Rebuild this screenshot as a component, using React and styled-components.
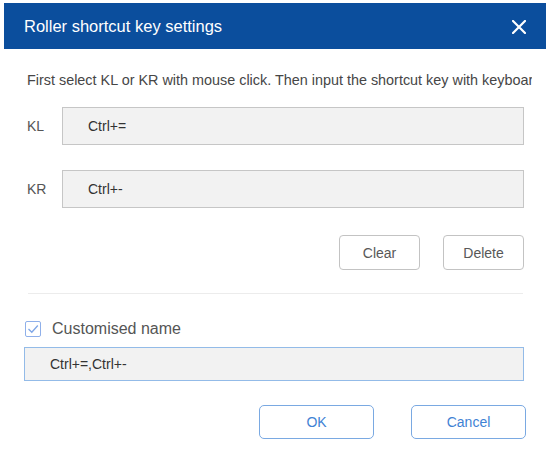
import React, { useState } from "react";
import styled, { createGlobalStyle } from "styled-components";

const GlobalStyle = createGlobalStyle`
  body {
    margin: 0;
    background: #ffffff;
    font-family: "Liberation Sans", Arial, sans-serif;
  }
`;

const App = () => {
    const [selected, setSelected] = useState(null);
    const [custom, setCustom] = useState(true);
    const [name, setName] = useState("Ctrl+=,Ctrl+-");
    const keys = [
        { id: "KL", value: "Ctrl+=" },
        { id: "KR", value: "Ctrl+-" },
    ];

    return (
        <>
            <GlobalStyle />
            <Dialog>
                <Header>
                    <Title>Roller shortcut key settings</Title>
                    <CloseButton aria-label="Close">
                        <svg width="14" height="14" viewBox="0 0 14 14">
                            <path d="M1 1 L13 13 M13 1 L1 13" stroke="#ffffff" strokeWidth="2.2" strokeLinecap="square" />
                        </svg>
                    </CloseButton>
                </Header>
                <Body>
                    <Hint>First select KL or KR with mouse click. Then input the shortcut key with keyboard</Hint>
                    {keys.map((k, i) => (
                        <KeyRow key={k.id} $gap={i === 0 ? 19 : 25}>
                            <KeyLabel>{k.id}</KeyLabel>
                            <KeyField
                                tabIndex={0}
                                $active={selected === k.id}
                                onClick={() => setSelected(k.id)}
                            >
                                {k.value}
                            </KeyField>
                        </KeyRow>
                    ))}
                    <ButtonRow $top={27} $gap={23}>
                        <GrayButton>Clear</GrayButton>
                        <GrayButton>Delete</GrayButton>
                    </ButtonRow>
                    <Divider />
                    <CheckRow onClick={() => setCustom(!custom)}>
                        <CheckBox>
                            {custom && (
                                <svg width="12" height="12" viewBox="0 0 12 12">
                                    <path d="M1.5 6 L4.8 9.2 L10.8 2.5" fill="none" stroke="#7fa6e6" strokeWidth="1.3" />
                                </svg>
                            )}
                        </CheckBox>
                        <CheckText>Customised name</CheckText>
                    </CheckRow>
                    <NameInput value={name} onChange={(e) => setName(e.target.value)} />
                    <ButtonRow $top={24} $gap={37} $overhang={2}>
                        <BlueButton>OK</BlueButton>
                        <BlueButton>Cancel</BlueButton>
                    </ButtonRow>
                </Body>
            </Dialog>
        </>
    );
};

export default App;

const Dialog = styled.div`
  margin: 3px 0 0 4px;
  width: 542px;
  background: #ffffff;
`;

const Header = styled.div`
  height: 46px;
  background-color: #0b4e9d;
  display: flex;
  align-items: center;
  justify-content: space-between;
  padding: 0 20px 0 20px;
  box-sizing: border-box;
`;

const Title = styled.span`
  color: #ffffff;
  font-size: 16.5px;
`;

const CloseButton = styled.button`
  background: none;
  border: none;
  padding: 0;
  width: 14px;
  height: 14px;
  display: flex;
  cursor: pointer;
  margin-top: 1px;
`;

const Body = styled.div`
  display: flex;
  flex-direction: column;
  padding: 0 22px 0 20px;
`;

const Hint = styled.div`
  margin: 23px -8px 0 0;
  padding-left: 3px;
  font-size: 14.4px;
  line-height: 16px;
  color: #464646;
  white-space: nowrap;
  overflow: hidden;
`;

const KeyRow = styled.div`
  display: flex;
  align-items: center;
  margin-top: ${(p) => p.$gap}px;
  padding-left: 3px;
`;

const KeyLabel = styled.span`
  width: 35px;
  font-size: 14px;
  color: #555555;
`;

const KeyField = styled.div`
  flex: 1;
  height: 38px;
  box-sizing: border-box;
  display: flex;
  align-items: center;
  border: 1px solid ${(p) => (p.$active ? "#93bbe8" : "#c6c6c6")};
  background: #f2f2f2;
  padding-left: 25px;
  font-size: 14px;
  color: #333333;
  outline: none;
  cursor: pointer;
`;

const ButtonRow = styled.div`
  display: flex;
  justify-content: flex-end;
  gap: ${(p) => p.$gap}px;
  margin-top: ${(p) => p.$top}px;
  margin-right: ${(p) => -(p.$overhang || 0)}px;
`;

const GrayButton = styled.button`
  width: 81px;
  height: 35px;
  border: 1px solid #c3c3c3;
  border-radius: 4px;
  background: #ffffff;
  color: #585858;
  font-family: "Liberation Sans", Arial, sans-serif;
  font-size: 14px;
  cursor: pointer;
`;

const BlueButton = styled.button`
  width: 115px;
  height: 34px;
  border: 1px solid #7aa9e2;
  border-radius: 5px;
  background: #ffffff;
  color: #3f82d4;
  font-family: "Liberation Sans", Arial, sans-serif;
  font-size: 14px;
  cursor: pointer;
`;

const Divider = styled.div`
  height: 1px;
  background: #ececec;
  margin: 23px 1px 0 4px;
`;

const CheckRow = styled.label`
  display: flex;
  align-items: center;
  gap: 11px;
  margin-top: 26px;
  padding-left: 1px;
  cursor: pointer;
`;

const CheckBox = styled.span`
  width: 16px;
  height: 16px;
  box-sizing: border-box;
  border: 1px solid #8fb0ea;
  border-radius: 2px;
  display: flex;
  align-items: center;
  justify-content: center;
`;

const CheckText = styled.span`
  font-size: 16px;
  color: #555555;
`;

const NameInput = styled.input`
  margin-top: 9px;
  height: 34px;
  box-sizing: border-box;
  border: 1px solid #93bbe8;
  background: #f2f2f2;
  padding: 0 0 0 25px;
  font-family: "Liberation Sans", Arial, sans-serif;
  font-size: 14px;
  color: #333333;
  outline: none;
`;
